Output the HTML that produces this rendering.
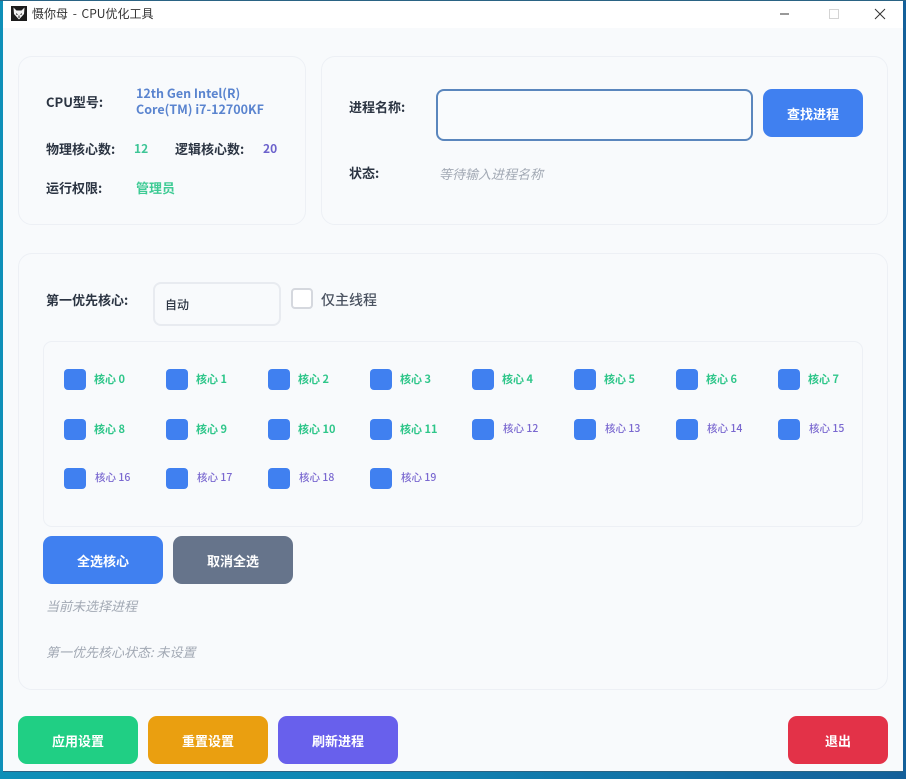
<!DOCTYPE html>
<html lang="zh-CN"><head><meta charset="utf-8"><title>慑你母 - CPU优化工具</title>
<style>
html,body{margin:0;padding:0;width:906px;height:779px;overflow:hidden}
body{position:relative;background:linear-gradient(90deg,#0e8fb8 0,#0f86b4 40%,#14609a 100%);font-family:"Noto Sans CJK SC","Liberation Sans",sans-serif}
.a{position:absolute;white-space:nowrap}
#win{position:absolute;left:3px;top:1px;width:900px;height:770px;background:#f8fafc;overflow:hidden;box-shadow:0 1px 0 #2a6384}
#bar{position:absolute;left:3px;top:1px;width:900px;height:27px;background:#fff}
#top{position:absolute;left:0;top:0;width:906px;height:1px;background:#2a6384}
.card{position:absolute;box-sizing:border-box;border:1px solid #edf0f5;border-radius:14px;background:#f8fafc}
.l{font-size:13px;font-weight:700;color:#2b3442;line-height:16px}
.btn{position:absolute;width:120px;height:48px;border-radius:9px;color:#fff;font-size:13px;font-weight:700;line-height:50px;text-align:center}
.cb{position:absolute;width:22px;height:21px;background:#4080f0;border-radius:4px}
.ct{position:absolute;font-size:11px;font-weight:700;line-height:14px;white-space:nowrap}
.g{color:#2fc68a}.p{color:#7a68d0;font-weight:500;font-size:10.500px}
.i{font-size:13px;font-style:italic;color:#a2a9b4;line-height:16px}
</style></head><body>
<div id="win"></div><div id="bar"></div><div id="top"></div>
<svg class="a" style="left:11px;top:6px" width="16" height="15" viewBox="0 0 16 15"><rect width="16" height="15" fill="#1c1c1c"/><path d="M2.500 1.500 5.500 4.500H10.500L13.500 1.500 13 8 8 13.500 3 8Z" fill="#f2f2f2"/><path d="M5 7 7 8.500 5.500 9ZM11 7 9 8.500 10.500 9ZM7.500 9.500H8.500V12H7.500Z" fill="#1c1c1c"/></svg>
<div class="a" style="left:32px;top:6px;font-size:12px;line-height:16px;color:#333;word-spacing:2px">慑你母 - CPU优化工具</div>
<svg class="a" style="left:780px;top:6px" width="110" height="16" viewBox="0 0 110 16" fill="none"><path d="M0 8H9" stroke="#333" stroke-width="1"/><rect x="49.500" y="3.500" width="9" height="9" stroke="#d4d4d4"/><path d="M95 3 105 13M105 3 95 13" stroke="#333" stroke-width="1"/></svg>

<div class="card" style="left:18px;top:56px;width:288px;height:169px"></div>
<div class="a l" style="left:46px;top:94px">CPU型号:</div>
<div class="a" style="left:136px;top:85px;font-size:12.500px;font-weight:700;line-height:16px;color:#5a84cf">12th Gen Intel(R)<br>Core(TM) i7-12700KF</div>
<div class="a l" style="left:46px;top:141px">物理核心数:</div>
<div class="a" style="left:134px;top:141px;font-size:12px;font-weight:700;line-height:16px;color:#3dc596">12</div>
<div class="a l" style="left:175px;top:141px">逻辑核心数:</div>
<div class="a" style="left:263px;top:141px;font-size:12px;font-weight:700;line-height:16px;color:#6c62cc">20</div>
<div class="a l" style="left:46px;top:180px">运行权限:</div>
<div class="a" style="left:136px;top:180px;font-size:13px;font-weight:700;line-height:16px;color:#3fcb95">管理员</div>

<div class="card" style="left:321px;top:56px;width:567px;height:169px"></div>
<div class="a l" style="left:349px;top:99px">进程名称:</div>
<div class="a" style="box-sizing:border-box;left:436px;top:89px;width:317px;height:52px;border:2px solid #5a86bd;border-radius:8px;background:#f9fbfd"></div>
<div class="btn" style="left:763px;top:89px;width:100px;background:#4080f0">查找进程</div>
<div class="a l" style="left:349px;top:165px">状态:</div>
<div class="a i" style="left:439px;top:166px">等待输入进程名称</div>

<div class="card" style="left:18px;top:253px;width:870px;height:437px"></div>
<div class="a l" style="left:46px;top:292px">第一优先核心:</div>
<div class="a" style="box-sizing:border-box;left:153px;top:282px;width:128px;height:44px;border:2px solid #e8ebf0;border-radius:8px"></div>
<div class="a" style="left:165px;top:297px;font-size:12px;font-weight:500;line-height:15px;color:#2b3442">自动</div>
<div class="a" style="box-sizing:border-box;left:291px;top:288px;width:22px;height:21px;border:2px solid #d5d8de;border-radius:4px;background:#fff"></div>
<div class="a" style="left:321px;top:292px;font-size:14px;font-weight:500;line-height:16px;color:#4a5260">仅主线程</div>

<div class="card" style="left:43px;top:341px;width:820px;height:186px;border-radius:9px"></div>

<div class="cb" style="left:64px;top:369px"></div><div class="ct g" style="left:94px;top:372px">核心 0</div>
<div class="cb" style="left:166px;top:369px"></div><div class="ct g" style="left:196px;top:372px">核心 1</div>
<div class="cb" style="left:268px;top:369px"></div><div class="ct g" style="left:298px;top:372px">核心 2</div>
<div class="cb" style="left:370px;top:369px"></div><div class="ct g" style="left:400px;top:372px">核心 3</div>
<div class="cb" style="left:472px;top:369px"></div><div class="ct g" style="left:502px;top:372px">核心 4</div>
<div class="cb" style="left:574px;top:369px"></div><div class="ct g" style="left:604px;top:372px">核心 5</div>
<div class="cb" style="left:676px;top:369px"></div><div class="ct g" style="left:706px;top:372px">核心 6</div>
<div class="cb" style="left:778px;top:369px"></div><div class="ct g" style="left:808px;top:372px">核心 7</div>

<div class="cb" style="left:64px;top:419px"></div><div class="ct g" style="left:94px;top:422px">核心 8</div>
<div class="cb" style="left:166px;top:419px"></div><div class="ct g" style="left:196px;top:422px">核心 9</div>
<div class="cb" style="left:268px;top:419px"></div><div class="ct g" style="left:298px;top:422px">核心 10</div>
<div class="cb" style="left:370px;top:419px"></div><div class="ct g" style="left:400px;top:422px">核心 11</div>
<div class="cb" style="left:472px;top:419px"></div><div class="ct p" style="left:503px;top:422px">核心 12</div>
<div class="cb" style="left:574px;top:419px"></div><div class="ct p" style="left:605px;top:422px">核心 13</div>
<div class="cb" style="left:676px;top:419px"></div><div class="ct p" style="left:707px;top:422px">核心 14</div>
<div class="cb" style="left:778px;top:419px"></div><div class="ct p" style="left:809px;top:422px">核心 15</div>

<div class="cb" style="left:64px;top:468px"></div><div class="ct p" style="left:95px;top:471px">核心 16</div>
<div class="cb" style="left:166px;top:468px"></div><div class="ct p" style="left:197px;top:471px">核心 17</div>
<div class="cb" style="left:268px;top:468px"></div><div class="ct p" style="left:299px;top:471px">核心 18</div>
<div class="cb" style="left:370px;top:468px"></div><div class="ct p" style="left:401px;top:471px">核心 19</div>

<div class="btn" style="left:43px;top:536px;background:#4080f0">全选核心</div>
<div class="btn" style="left:173px;top:536px;background:#66748b">取消全选</div>
<div class="a i" style="left:46px;top:598px">当前未选择进程</div>
<div class="a i" style="left:46px;top:644px">第一优先核心状态: 未设置</div>

<div class="btn" style="left:18px;top:716px;background:#20cf84">应用设置</div>
<div class="btn" style="left:148px;top:716px;background:#ea9f10">重置设置</div>
<div class="btn" style="left:278px;top:716px;background:#6860ec">刷新进程</div>
<div class="btn" style="left:788px;top:716px;width:100px;background:#e33248">退出</div>
</body></html>
